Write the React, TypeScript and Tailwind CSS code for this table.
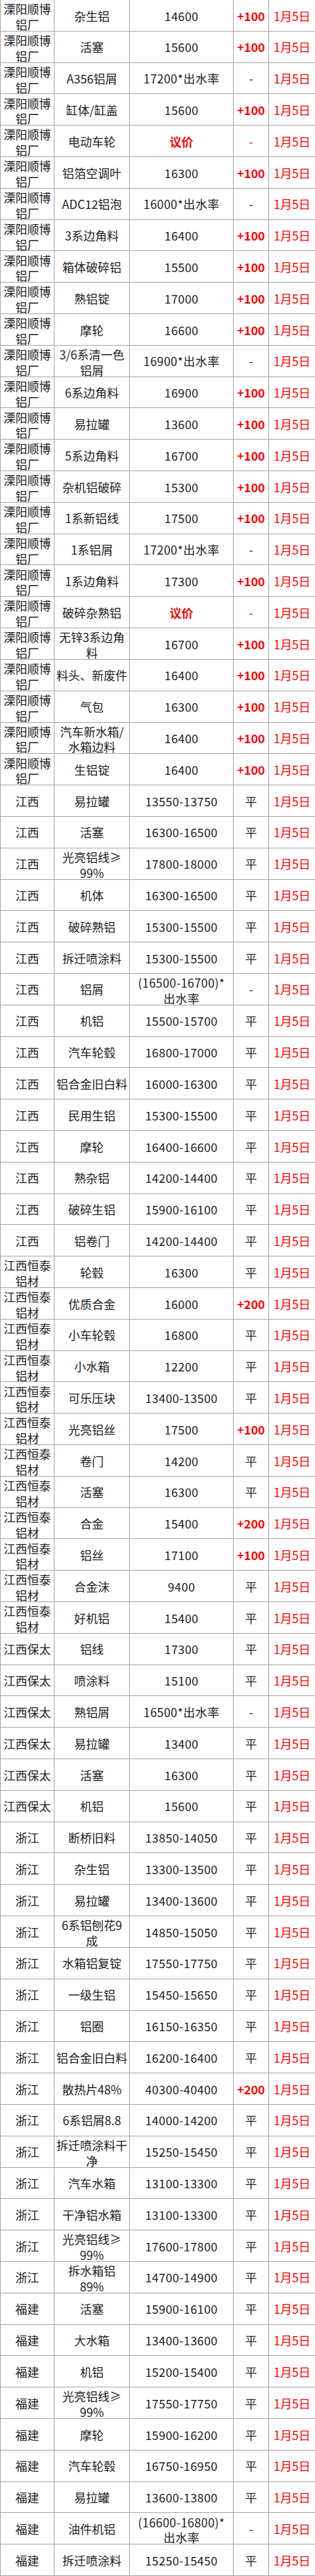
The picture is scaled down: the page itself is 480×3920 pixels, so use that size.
import React from "react";

type Row = [string, string, string, string];

const SB = "溧阳顺博\n铝厂";
const JX = "江西";
const HT = "江西恒泰\n铝材";
const BT = "江西保太";
const ZJ = "浙江";
const FJ = "福建";

const rows: Row[] = [
  [SB, "杂生铝", "14600", "+100"],
  [SB, "活塞", "15600", "+100"],
  [SB, "A356铝屑", "17200*出水率", "-"],
  [SB, "缸体/缸盖", "15600", "+100"],
  [SB, "电动车轮", "议价", "-r"],
  [SB, "铝箔空调叶", "16300", "+100"],
  [SB, "ADC12铝泡", "16000*出水率", "-"],
  [SB, "3系边角料", "16400", "+100"],
  [SB, "箱体破碎铝", "15500", "+100"],
  [SB, "熟铝锭", "17000", "+100"],
  [SB, "摩轮", "16600", "+100"],
  [SB, "3/6系清一色\n铝屑", "16900*出水率", "-"],
  [SB, "6系边角料", "16900", "+100"],
  [SB, "易拉罐", "13600", "+100"],
  [SB, "5系边角料", "16700", "+100"],
  [SB, "杂机铝破碎", "15300", "+100"],
  [SB, "1系新铝线", "17500", "+100"],
  [SB, "1系铝屑", "17200*出水率", "-"],
  [SB, "1系边角料", "17300", "+100"],
  [SB, "破碎杂熟铝", "议价", "-r"],
  [SB, "无锌3系边角\n料", "16700", "+100"],
  [SB, "料头、新废件", "16400", "+100"],
  [SB, "气包", "16300", "+100"],
  [SB, "汽车新水箱/\n水箱边料", "16400", "+100"],
  [SB, "生铝锭", "16400", "+100"],
  [JX, "易拉罐", "13550-13750", "平"],
  [JX, "活塞", "16300-16500", "平"],
  [JX, "光亮铝线≥\n99%", "17800-18000", "平"],
  [JX, "机体", "16300-16500", "平"],
  [JX, "破碎熟铝", "15300-15500", "平"],
  [JX, "拆迁喷涂料", "15300-15500", "平"],
  [JX, "铝屑", "(16500-16700)*\n出水率", "-"],
  [JX, "机铝", "15500-15700", "平"],
  [JX, "汽车轮毂", "16800-17000", "平"],
  [JX, "铝合金旧白料", "16000-16300", "平"],
  [JX, "民用生铝", "15300-15500", "平"],
  [JX, "摩轮", "16400-16600", "平"],
  [JX, "熟杂铝", "14200-14400", "平"],
  [JX, "破碎生铝", "15900-16100", "平"],
  [JX, "铝卷门", "14200-14400", "平"],
  [HT, "轮毂", "16300", "平"],
  [HT, "优质合金", "16000", "+200"],
  [HT, "小车轮毂", "16800", "平"],
  [HT, "小水箱", "12200", "平"],
  [HT, "可乐压块", "13400-13500", "平"],
  [HT, "光亮铝丝", "17500", "+100"],
  [HT, "卷门", "14200", "平"],
  [HT, "活塞", "16300", "平"],
  [HT, "合金", "15400", "+200"],
  [HT, "铝丝", "17100", "+100"],
  [HT, "合金沫", "9400", "平"],
  [HT, "好机铝", "15400", "平"],
  [BT, "铝线", "17300", "平"],
  [BT, "喷涂料", "15100", "平"],
  [BT, "熟铝屑", "16500*出水率", "-"],
  [BT, "易拉罐", "13400", "平"],
  [BT, "活塞", "16300", "平"],
  [BT, "机铝", "15600", "平"],
  [ZJ, "断桥旧料", "13850-14050", "平"],
  [ZJ, "杂生铝", "13300-13500", "平"],
  [ZJ, "易拉罐", "13400-13600", "平"],
  [ZJ, "6系铝刨花9\n成", "14850-15050", "平"],
  [ZJ, "水箱铝复锭", "17550-17750", "平"],
  [ZJ, "一级生铝", "15450-15650", "平"],
  [ZJ, "铝圈", "16150-16350", "平"],
  [ZJ, "铝合金旧白料", "16200-16400", "平"],
  [ZJ, "散热片48%", "40300-40400", "+200"],
  [ZJ, "6系铝屑8.8", "14000-14200", "平"],
  [ZJ, "拆迁喷涂料干\n净", "15250-15450", "平"],
  [ZJ, "汽车水箱", "13100-13300", "平"],
  [ZJ, "干净铝水箱", "13100-13300", "平"],
  [ZJ, "光亮铝线≥\n99%", "17600-17800", "平"],
  [ZJ, "拆水箱铝\n89%", "14700-14900", "平"],
  [FJ, "活塞", "15900-16100", "平"],
  [FJ, "大水箱", "13400-13600", "平"],
  [FJ, "机铝", "15200-15400", "平"],
  [FJ, "光亮铝线≥\n99%", "17550-17750", "平"],
  [FJ, "摩轮", "15900-16200", "平"],
  [FJ, "汽车轮毂", "16750-16950", "平"],
  [FJ, "易拉罐", "13600-13800", "平"],
  [FJ, "油件机铝", "(16600-16800)*\n出水率", "-"],
  [FJ, "拆迁喷涂料", "15250-15450", "平"],
];

const base =
  "flex items-center justify-center text-center border-r border-b border-[#a3a3a3] overflow-hidden leading-[23.7px] whitespace-pre-line";

function cls(text: string, extra = "") {
  const pad = text.includes("\n") ? "pt-[5px]" : "pt-[2px]";
  return `${base} ${pad} ${extra}`;
}

export default function App() {
  return (
    <div
      className="w-[480px] h-[3920px] bg-white text-[#1c1c1c] text-[18px]"
      style={{ fontFamily: '"Noto Sans CJK SC", "Noto Sans", sans-serif' }}
    >
      <div className="grid h-full grid-cols-[82px_115px_158px_54px_71px] grid-rows-[repeat(82,minmax(0,1fr))] border-l border-[#a3a3a3]">
        {rows.map((r, i) => {
          const [a, b, c, d] = r;
          const isPlus = d.startsWith("+");
          const redDash = d === "-r";
          const negotiate = c === "议价";
          return (
            <React.Fragment key={i}>
              <div className={cls(a)}>{a}</div>
              <div className={cls(b)}>{b}</div>
              <div
                className={cls(
                  c,
                  negotiate ? "text-[#ff0000] font-bold" : "tracking-[0.4px]"
                )}
              >
                {c}
              </div>
              <div
                className={cls(
                  d,
                  isPlus ? "text-[#ff0000] font-bold" : redDash ? "text-[#ff0000]" : ""
                )}
              >
                {redDash ? "-" : d}
              </div>
              <div className={cls("x", "text-[#ff0000]")}>1月5日</div>
            </React.Fragment>
          );
        })}
      </div>
    </div>
  );
}
